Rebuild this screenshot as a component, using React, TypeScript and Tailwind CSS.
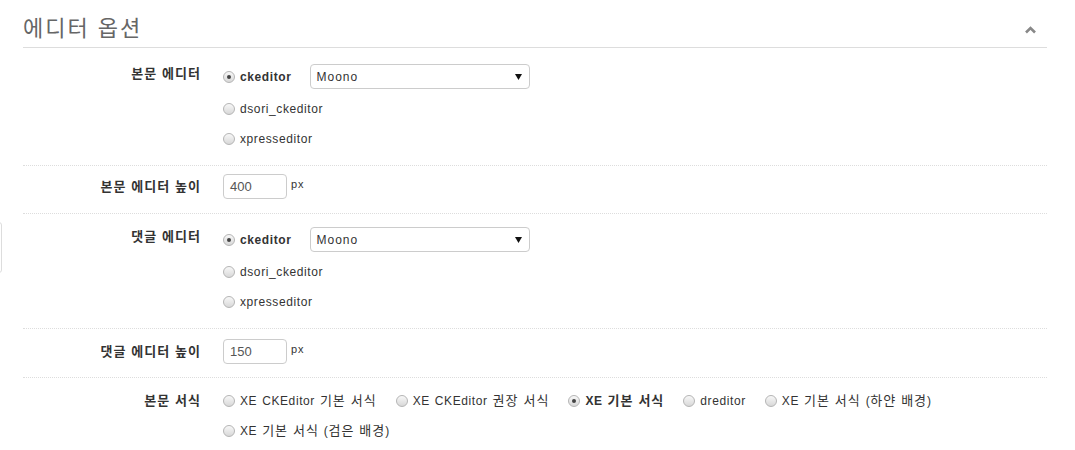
import React from 'react';

const FONT = '"Liberation Sans", "Noto Sans CJK KR", Arial, sans-serif';

// Hangul runs are set a little larger and looser, like the dotum rendering in the reference
const Txt = ({text}: {text: string}) => (
    <>
        {text.split(/([\uac00-\ud7a3]+)/).map((part, i) =>
            /[\uac00-\ud7a3]/.test(part) ? (
                <span key={i} className="text-[13px] tracking-[1px]">{part}</span>
            ) : (
                <span key={i}>{part}</span>
            )
        )}
    </>
);

const Radio = ({checked, label, bold}: {checked?: boolean; label: string; bold?: boolean}) => (
    <label className="flex items-center h-[18px] text-[12px] tracking-[0.6px] [word-spacing:1px] text-[#333] whitespace-nowrap">
        <span
            className="relative w-[12px] h-[12px] rounded-full border border-[#b5b5b5] bg-gradient-to-b from-[#f8f8f8] to-[#d8d8d8] mr-[5px] shrink-0">
            {checked && (
                <span className="absolute left-[3px] top-[3px] w-[4px] h-[4px] rounded-full bg-[#444]"/>
            )}
        </span>
        <span className={bold ? 'font-bold' : ''}><Txt text={label}/></span>
    </label>
);

const Select = ({value}: {value: string}) => (
    <div
        className="ml-[19px] w-[220px] h-[25px] border border-[#ccc] rounded-[4px] bg-white flex items-center justify-between pl-[5px] pr-[7px] text-[12px] tracking-[1px] text-[#333]">
        <span>{value}</span>
        <svg width="7" height="6" viewBox="0 0 7 6">
            <path d="M0 0h7L3.5 6z" fill="#111"/>
        </svg>
    </div>
);

const Label = ({text, h}: {text: string; h: string}) => (
    <div
        className={`w-[178px] ${h} flex items-center justify-end text-[12px] font-bold tracking-[0.5px] [word-spacing:1px] text-[#333] whitespace-nowrap`}>
        <span><Txt text={text}/></span>
    </div>
);

const EditorRow = ({label, pt}: {label: string; pt: string}) => (
    <div className={`flex border-b border-dotted border-[#ddd] pb-[17px] ${pt}`}>
        <Label text={label} h="h-[20px]"/>
        <div className="pl-[22px] flex flex-col">
            <div className="flex items-center h-[25px]">
                <Radio checked bold label="ckeditor"/>
                <Select value="Moono"/>
            </div>
            <div className="flex mt-[11px]">
                <Radio label="dsori_ckeditor"/>
            </div>
            <div className="flex mt-[12px]">
                <Radio label="xpresseditor"/>
            </div>
        </div>
    </div>
);

const HeightRow = ({label, value, pt, pb}: {label: string; value: string; pt: string; pb: string}) => (
    <div className={`flex border-b border-dotted border-[#ddd] ${pt} ${pb}`}>
        <Label text={label} h="h-[25px]"/>
        <div className="pl-[22px] flex items-center gap-[4px]">
            <div
                className="w-[64px] h-[25px] border border-[#ccc] rounded-[4px] bg-white flex items-center pl-[6px] text-[13px] text-[#555]">
                {value}
            </div>
            <span className="text-[11px] tracking-[1px] text-[#333] -mt-[4px]">px</span>
        </div>
    </div>
);

const styles = [
    {label: 'XE CKEditor 기본 서식'},
    {label: 'XE CKEditor 권장 서식'},
    {label: 'XE 기본 서식', checked: true},
    {label: 'dreditor'},
    {label: 'XE 기본 서식 (하얀 배경)'},
    {label: 'XE 기본 서식 (검은 배경)'},
];

export default function App() {
    return (
        <div className="relative w-[1075px] h-[450px] bg-white overflow-hidden" style={{fontFamily: FONT}}>
            <div className="absolute left-[-20px] top-[222px] w-[22px] h-[51px] border border-[#ddd] rounded-[3px]"/>
            <div className="pl-[23px] pr-[28px]">
                <div className="flex items-center justify-between pt-[13px] pb-[2px] border-b border-[#ddd]">
                    <h2 className="leading-[32px] text-[22px] text-[#666] tracking-[2px]">에디터 옵션</h2>
                    <svg width="11" height="8" viewBox="0 0 11 8" className="mr-[11px] mt-[2px]">
                        <path d="M1 6.5L5.5 2 10 6.5" stroke="#888" strokeWidth="2.6" fill="none"/>
                    </svg>
                </div>

                <EditorRow label="본문 에디터" pt="pt-[16px]"/>
                <HeightRow label="본문 에디터 높이" value="400" pt="pt-[8px]" pb="pb-[14px]"/>
                <EditorRow label="댓글 에디터" pt="pt-[13px]"/>
                <HeightRow label="댓글 에디터 높이" value="150" pt="pt-[10px]" pb="pb-[13px]"/>

                <div className="flex pt-[14px]">
                    <Label text="본문 서식" h="h-[18px]"/>
                    <div className="pl-[22px] flex flex-wrap gap-y-[12px] w-[846px]">
                        {styles.map(s => (
                            <div key={s.label} className="flex mr-[19px]">
                                <Radio label={s.label} checked={s.checked} bold={s.checked}/>
                            </div>
                        ))}
                    </div>
                </div>
            </div>
        </div>
    );
}
